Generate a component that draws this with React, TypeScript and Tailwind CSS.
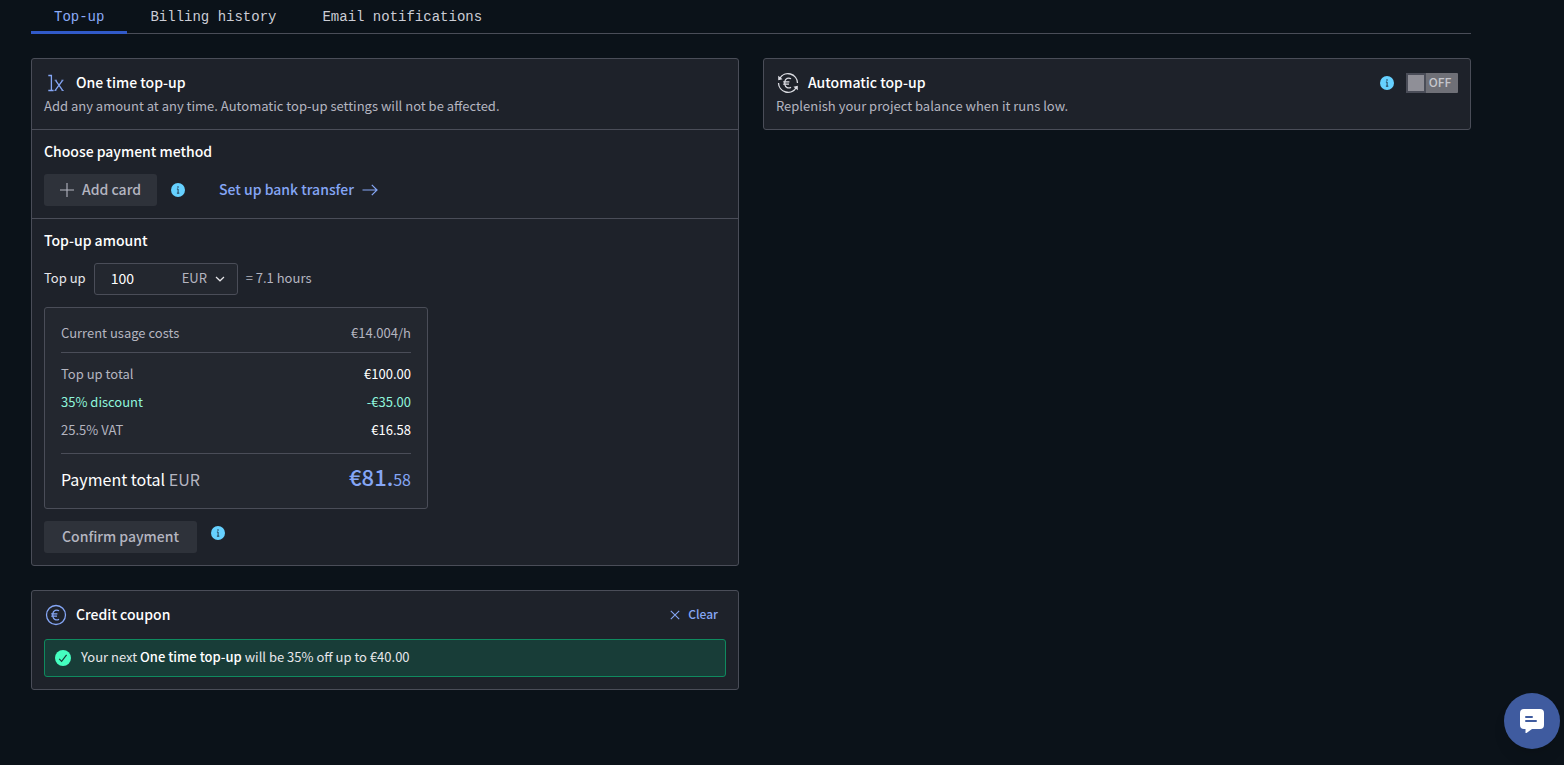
import React, { useState } from 'react';

interface CardProps {
  children: React.ReactNode;
  label: string;
}

interface CostRowProps {
  label: string;
  value: string;
  className?: string;
  valueClassName?: string;
}

const tabs = ['Top-up', 'Billing history', 'Email notifications'];

const Card: React.FC<CardProps> = ({ children, label }) => (
  <section
    aria-label={label}
    className="rounded-[3px] border border-[#4a4d58] bg-[#1e222a]"
  >
    {children}
  </section>
);

const InfoButton: React.FC<{ label: string }> = ({ label }) => (
  <button type="button" aria-label={label} className="block shrink-0">
    <svg viewBox="0 0 14 14" className="h-3.5 w-3.5">
      <circle cx="7" cy="7" r="7" fill="#66d1ff" />
      <path
        d="M5.9 6H7.1V10.2M5.9 10.2H8.3"
        fill="none"
        stroke="#1e2f42"
        strokeWidth="0.9"
      />
      <circle cx="7" cy="4" r="0.75" fill="#1e2f42" />
    </svg>
  </button>
);

const OneTimeIcon = () => (
  <svg viewBox="0 0 24 24" className="h-6 w-6" fill="none" stroke="#85a6f5" strokeWidth="1.3">
    <path d="M4.3 4.5H7.4V19.4M4.3 19.5H9.6M11.6 9.4L18.6 19.4M18.6 9.4L11.2 19.4" />
    <path d="M10.6 9.2H12.8M17.4 9.2H19.6M10.4 19.5H12.4M17.6 19.5H19.8" strokeWidth="0.8" />
  </svg>
);

const EuroCircleIcon = () => (
  <svg viewBox="0 0 24 24" className="h-6 w-6" fill="none" stroke="#85a6f5" strokeWidth="1.3">
    <circle cx="12" cy="12" r="9.5" />
    <path d="M15 7.8A4 4 0 0 0 8.8 10.5V13.5A4 4 0 0 0 15 16.2M7.2 10.8H13.4M7.2 13.2H13" />
  </svg>
);

const AutoTopUpIcon = () => (
  <svg viewBox="0 0 24 24" className="h-6 w-6" fill="none" stroke="#dcdde3" strokeWidth="1.3">
    <path d="M3.8 7.4A9.5 9.5 0 0 1 21.5 12" />
    <path d="M20.2 16.6A9.5 9.5 0 0 1 2.5 12" />
    <path d="M2.2 4.8V9.2L6.6 8.2ZM21.8 19.2V14.8L17.4 15.8Z" fill="#dcdde3" stroke="none" />
    <path d="M15 7.8A4 4 0 0 0 8.8 10.5V13.5A4 4 0 0 0 15 16.2M7.2 10.8H13.4M7.2 13.2H13" />
  </svg>
);

const CostRow: React.FC<CostRowProps> = ({
  label,
  value,
  className = 'text-[#b4b5c0]',
  valueClassName = '',
}) => (
  <div className={`flex items-center justify-between text-[13px] leading-[18px] ${className}`}>
    <dt>{label}</dt>
    <dd className={valueClassName}>{value}</dd>
  </div>
);

const App: React.FC = () => {
  const [activeTab, setActiveTab] = useState('Top-up');
  const [amount, setAmount] = useState('100');
  const [currency, setCurrency] = useState('EUR');
  const [automatic, setAutomatic] = useState(false);

  return (
    <div className="min-h-screen bg-[#0b1219] pb-6 font-['Noto_Sans_CJK_SC','Open_Sans',sans-serif] text-white">
      <div className="ml-[31px] mr-6 max-w-[1440px]">
        <div role="tablist" className="flex border-b border-[#4a4d58]">
          {tabs.map((tab) => (
            <button
              key={tab}
              type="button"
              role="tab"
              aria-selected={tab === activeTab}
              onClick={() => setActiveTab(tab)}
              className={`-mb-px h-[34px] border-b-3 px-[23px] pt-0.5 font-['Liberation_Mono',monospace] text-[14px] leading-5 ${
                tab === activeTab
                  ? 'border-[#315ac9] text-[#8cabf8]'
                  : 'border-transparent text-[#cccdd5]'
              }`}
            >
              {tab}
            </button>
          ))}
        </div>

        <div className="mt-6 grid grid-cols-2 items-start gap-6">
          <div className="space-y-6">
            <Card label="One time top-up">
              <header className="p-3">
                <div className="flex items-center gap-2">
                  <OneTimeIcon />
                  <h2 className="pb-0.5 text-[14px] leading-[22px] font-medium">One time top-up</h2>
                </div>
                <p className="text-[13px] leading-[22px] text-[#b4b5c0]">
                  Add any amount at any time. Automatic top-up settings will not be affected.
                </p>
              </header>

              <div className="border-t border-[#4a4d58] p-3">
                <h3 className="pb-0.5 text-[14px] leading-[18px] font-medium">Choose payment method</h3>
                <div className="mt-3 flex items-center">
                  <button
                    type="button"
                    className="flex h-8 items-center gap-2 rounded-[3px] bg-[#2e323a] px-4 text-[14px] font-medium text-[#b4b5c0]"
                  >
                    <svg viewBox="0 0 14 14" className="h-3.5 w-3.5" fill="none" stroke="currentColor" strokeWidth="1.1">
                      <path d="M7 0V14M0 7H14" />
                    </svg>
                    <span className="pb-0.5">Add card</span>
                  </button>
                  <div className="ml-3.5 mr-[34px]">
                    <InfoButton label="About adding a card" />
                  </div>
                  <a href="#bank-transfer" className="flex items-center gap-2 text-[14px] leading-5 font-medium text-[#85a6f5]">
                    <span className="pb-0.5">Set up bank transfer</span>
                    <svg viewBox="0 0 16 14" className="h-3.5 w-4" fill="none" stroke="currentColor" strokeWidth="1.2">
                      <path d="M0.5 7H15M9.8 1.8L15 7L9.8 12.2" />
                    </svg>
                  </a>
                </div>
              </div>

              <div className="border-t border-[#4a4d58] p-3">
                <h3 className="pb-0.5 text-[14px] leading-[18px] font-medium">Top-up amount</h3>
                <div className="mt-3 flex items-center gap-2">
                  <label htmlFor="amount" className="pb-0.5 text-[13px] leading-[18px] text-[#e6e6ea]">
                    Top up
                  </label>
                  <div className="flex h-8 w-36 items-center rounded-[3px] border border-[#4a4d58] bg-[#23272f]">
                    <input
                      id="amount"
                      type="text"
                      inputMode="decimal"
                      value={amount}
                      onChange={(e) => setAmount(e.target.value)}
                      className="w-[87px] bg-transparent pb-0.5 pl-4 text-[14px] leading-5 outline-none"
                    />
                    <div className="grid flex-1 items-center">
                      <select
                        aria-label="Currency"
                        value={currency}
                        onChange={(e) => setCurrency(e.target.value)}
                        className="col-start-1 row-start-1 appearance-none bg-transparent pb-0.5 text-[13px] leading-5 text-[#b4b5c0] outline-none"
                      >
                        <option>EUR</option>
                        <option>USD</option>
                      </select>
                      <svg
                        viewBox="0 0 10 6"
                        className="pointer-events-none col-start-1 row-start-1 mr-3 h-1.5 w-2.5 justify-self-end"
                        fill="none"
                        stroke="#e6e6ea"
                        strokeWidth="1.2"
                      >
                        <path d="M1 1L5 4.8L9 1" />
                      </svg>
                    </div>
                  </div>
                  <span className="pb-0.5 text-[13px] leading-[18px] text-[#b4b5c0]">= 7.1 hours</span>
                </div>

                <dl className="mt-3 w-96 rounded-[3px] border border-[#4a4d58] bg-[#23272f] p-4">
                  <div className="pb-2.5">
                    <CostRow label="Current usage costs" value="€14.004/h" />
                  </div>
                  <div className="space-y-2.5 border-y border-[#4a4d58] pt-3 pb-3.5">
                    <CostRow label="Top up total" value="€100.00" valueClassName="text-white" />
                    <CostRow label="35% discount" value="-€35.00" className="text-[#8ff5dc]" />
                    <CostRow label="25.5% VAT" value="€16.58" valueClassName="text-white" />
                  </div>
                  <div className="flex h-[38px] items-baseline justify-between pt-2.5 leading-6">
                    <dt className="text-[16px]">
                      Payment total <span className="text-[#b4b5c0]">EUR</span>
                    </dt>
                    <dd className="text-[16px] text-[#85a6f5]">
                      <span className="text-[22px] font-medium">€81.</span>58
                    </dd>
                  </div>
                </dl>

                <div className="mt-3 flex items-start gap-3.5">
                  <button
                    type="button"
                    className="h-8 rounded-[3px] bg-[#2e323a] px-[18px] pb-0.5 text-[14px] font-medium text-[#b4b5c0]"
                  >
                    Confirm payment
                  </button>
                  <div className="pt-[5px]">
                    <InfoButton label="About confirming the payment" />
                  </div>
                </div>
              </div>
            </Card>

            <Card label="Credit coupon">
              <div className="p-3">
                <div className="flex items-center gap-2">
                  <EuroCircleIcon />
                  <h2 className="flex-1 pb-0.5 text-[14px] leading-[22px] font-medium">Credit coupon</h2>
                  <button type="button" className="mr-2 flex items-center gap-2 text-[12px] leading-[18px] font-medium text-[#85a6f5]">
                    <svg viewBox="0 0 10 10" className="h-2.5 w-2.5" fill="none" stroke="currentColor" strokeWidth="1.1">
                      <path d="M0.8 0.8L9.2 9.2M9.2 0.8L0.8 9.2" />
                    </svg>
                    <span className="pb-0.5">Clear</span>
                  </button>
                </div>
                <div
                  role="status"
                  className="mt-3 flex items-center gap-2.5 rounded-[3px] border border-[#0f8a5f] bg-[#183d38] px-2.5 py-2"
                >
                  <svg viewBox="0 0 16 16" className="h-4 w-4 shrink-0">
                    <circle cx="8" cy="8" r="8" fill="#45ffc0" />
                    <path d="M4.2 8.8L6.6 11.3L11.6 4.8" fill="none" stroke="#183d38" strokeWidth="1.2" />
                  </svg>
                  <p className="pb-0.5 text-[13px] leading-[18px] text-[#e6e6ea]">
                    Your next <strong className="font-medium text-white">One time top-up</strong> will be 35% off up to €40.00
                  </p>
                </div>
              </div>
            </Card>
          </div>

          <Card label="Automatic top-up">
            <header className="p-3">
              <div className="flex items-center gap-2">
                <AutoTopUpIcon />
                <h2 className="flex-1 pb-0.5 text-[14px] leading-[22px] font-medium">Automatic top-up</h2>
                <InfoButton label="About automatic top-up" />
                <label className="ml-1 flex h-5 w-[52px] items-center rounded-[1px] bg-[#6f7077] text-[12px] leading-[18px] font-medium text-[#c5c6cc]">
                  <input
                    type="checkbox"
                    role="switch"
                    aria-label="Automatic top-up"
                    checked={automatic}
                    onChange={(e) => setAutomatic(e.target.checked)}
                    className="h-5 w-5 appearance-none border-2 border-[#4a4d58] bg-[#8f8f97]"
                  />
                  <span className="flex-1 pr-1 pb-0.5 text-center">{automatic ? 'ON' : 'OFF'}</span>
                </label>
              </div>
              <p className="text-[13px] leading-[22px] text-[#b4b5c0]">
                Replenish your project balance when it runs low.
              </p>
            </header>
          </Card>
        </div>
      </div>

      <button
        type="button"
        aria-label="Open chat"
        className="fixed right-1 bottom-4 flex h-14 w-14 items-center justify-center rounded-full bg-[#3f5b9f] shadow-lg"
      >
        <svg viewBox="0 0 24 24" className="h-6 w-6">
          <path d="M4 0H20A4 4 0 0 1 24 4V16A4 4 0 0 1 20 20H12L6.5 24H5.5V20H4A4 4 0 0 1 0 16V4A4 4 0 0 1 4 0Z" fill="#fff" />
          <path d="M6 8H12M6 12H16" stroke="#3f5b9f" strokeWidth="2" strokeLinecap="round" />
        </svg>
      </button>
    </div>
  );
};

export default App;
